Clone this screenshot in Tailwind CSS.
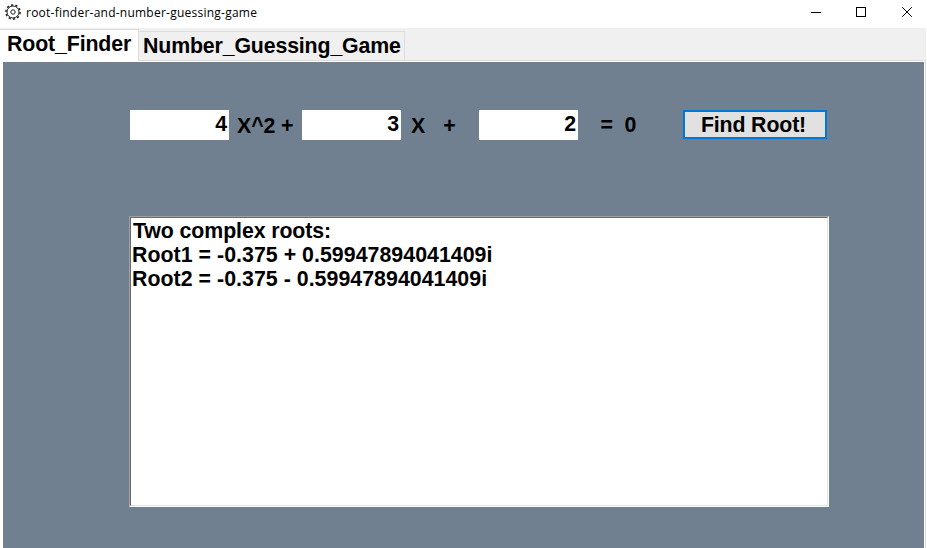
<!DOCTYPE html>
<html lang="en">
<head>
<meta charset="utf-8">
<title>root-finder-and-number-guessing-game</title>
<script src="https://cdn.jsdelivr.net/npm/@tailwindcss/browser@4"></script>
</head>
<body class="w-[927px] h-[548px] overflow-hidden bg-white text-black font-['Liberation_Sans',Arial,sans-serif]">
<div class="flex flex-col h-full">
  <header class="flex h-7 shrink-0 items-start">
    <svg class="ml-[5px] mt-1 shrink-0" width="16" height="16" viewBox="0 0 16 16" fill="none" stroke="#222">
      <circle cx="8" cy="8" r="7.1" stroke-width="1.5" stroke-dasharray="2.23 2.23"/>
      <circle cx="8" cy="8" r="6" stroke-width="1"/>
      <circle cx="8" cy="8" r="2.2" stroke-width="1"/>
    </svg>
    <h1 class="ml-[5px] mt-[4px] w-[240px] text-[12px] leading-[17px] tracking-[0.24px] whitespace-nowrap font-['Open_Sans','Noto_Sans',sans-serif]">root-finder-and-number-guessing-game</h1>
    <div class="ml-auto mt-[7px] mr-[15px] flex gap-[35px]">
      <svg width="10" height="11" viewBox="0 0 10 11" shape-rendering="crispEdges"><path d="M0 5.5H10" stroke="#000"/></svg>
      <svg width="11" height="11" viewBox="0 0 11 11" fill="none" stroke="#000" shape-rendering="crispEdges"><rect x=".5" y=".5" width="9" height="9"/></svg>
      <svg width="10" height="11" viewBox="0 0 10 11" fill="none" stroke="#000"><path d="M.2 .2L9.8 9.8M9.8 .2L.2 9.8"/></svg>
    </div>
  </header>
  <nav class="mr-px flex h-[33px] shrink-0 bg-[#f0f0f0] text-[21.33px] leading-6 font-bold whitespace-nowrap">
    <div class="mt-px h-8 w-[139px] border-t border-r border-[#dcdcdc] bg-white pl-[7px] pt-[2px] tracking-[-0.13px]">Root_Finder</div>
    <div class="mt-[3px] h-[30px] w-[266px] border-t border-r border-b border-[#dcdcdc] bg-[#f0f0f0] pl-1 pt-[2px] tracking-[-0.15px]">Number_Guessing_Game</div>
    <div class="flex-1 border-b border-[#dcdcdc]"></div>
  </nav>
  <main class="mr-px flex-1 min-h-0 border-r border-[#dcdcdc] pl-[3px] pr-px pt-px">
    <div class="h-full bg-[#708090] pt-12 pl-[126px] text-[21.33px] leading-6 font-bold">
      <div class="flex h-8 items-start whitespace-pre">
        <div class="ml-px h-[30px] w-[99px] bg-white pr-[2px] pt-[2px] text-right">4</div>
        <div class="w-[73px] pl-2 pt-1 tracking-[-0.1px]">X^2 +</div>
        <div class="h-[30px] w-[99px] bg-white pr-[2px] pt-[2px] text-right">3</div>
        <div class="flex w-[78px] gap-[18px] pl-[10px] pt-1"><span>X</span><span>+</span></div>
        <div class="h-[30px] w-[99px] bg-white pr-[2px] pt-[2px] text-right">2</div>
        <div class="flex w-[105px] gap-[11.5px] pl-[22.5px] pt-[3px]"><span>=</span><span>0</span></div>
        <button class="h-[29px] w-[144px] border-2 border-[#0078d7] bg-[#e1e1e1] pt-px pr-[3px] text-center leading-6 tracking-[-0.15px]">Find Root!</button>
      </div>
      <div class="mt-[74px] h-[291px] w-[700px] border border-t-[#a0a0a0] border-l-[#a0a0a0] border-r-white border-b-white">
        <div class="h-full border border-t-[#696969] border-l-[#696969] border-r-[#e3e3e3] border-b-[#e3e3e3] bg-white pl-[1px] pt-px whitespace-nowrap">
          <p class="pl-px tracking-[-0.1px]">Two complex roots:</p>
          <p class="tracking-[0.035px]">Root1 = -0.375 + 0.59947894041409i</p>
          <p class="tracking-[0.035px]">Root2 = -0.375 - 0.59947894041409i</p>
        </div>
      </div>
    </div>
  </main>
</div>
</body>
</html>
